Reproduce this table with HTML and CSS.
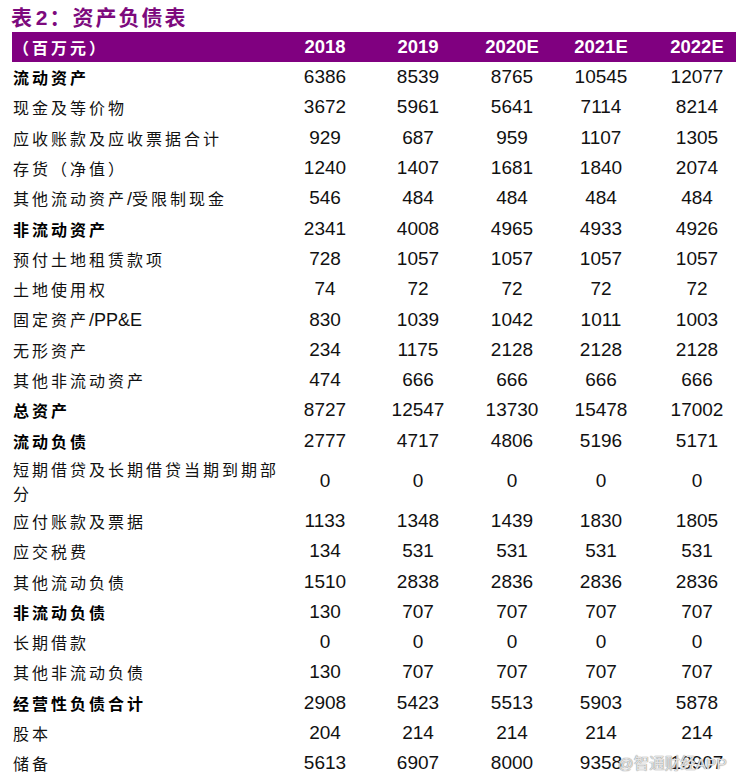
FILE: index.html
```html
<!DOCTYPE html>
<html lang="zh-CN">
<head>
<meta charset="utf-8">
<title>表 2：资产负债表</title>
<link rel="stylesheet" href="styles.css">
</head>
<body>
<div class="page">
  <h1 class="title">表 <span class="lat">2</span>：资产负债表</h1>
  <div class="table">
    <div class="row head">
      <div class="label">（百万元）</div>
      <div class="num">2018</div><div class="num">2019</div><div class="num">2020E</div><div class="num">2021E</div><div class="num">2022E</div>
    </div>
    <div class="row strong"><div class="label">流动资产</div><div class="num">6386</div><div class="num">8539</div><div class="num">8765</div><div class="num">10545</div><div class="num">12077</div></div>
    <div class="row"><div class="label">现金及等价物</div><div class="num">3672</div><div class="num">5961</div><div class="num">5641</div><div class="num">7114</div><div class="num">8214</div></div>
    <div class="row"><div class="label">应收账款及应收票据合计</div><div class="num">929</div><div class="num">687</div><div class="num">959</div><div class="num">1107</div><div class="num">1305</div></div>
    <div class="row"><div class="label">存货（净值）</div><div class="num">1240</div><div class="num">1407</div><div class="num">1681</div><div class="num">1840</div><div class="num">2074</div></div>
    <div class="row"><div class="label">其他流动资产<span class="lat">/</span>受限制现金</div><div class="num">546</div><div class="num">484</div><div class="num">484</div><div class="num">484</div><div class="num">484</div></div>
    <div class="row strong"><div class="label">非流动资产</div><div class="num">2341</div><div class="num">4008</div><div class="num">4965</div><div class="num">4933</div><div class="num">4926</div></div>
    <div class="row"><div class="label">预付土地租赁款项</div><div class="num">728</div><div class="num">1057</div><div class="num">1057</div><div class="num">1057</div><div class="num">1057</div></div>
    <div class="row"><div class="label">土地使用权</div><div class="num">74</div><div class="num">72</div><div class="num">72</div><div class="num">72</div><div class="num">72</div></div>
    <div class="row"><div class="label">固定资产<span class="lat">/PP&amp;E</span></div><div class="num">830</div><div class="num">1039</div><div class="num">1042</div><div class="num">1011</div><div class="num">1003</div></div>
    <div class="row"><div class="label">无形资产</div><div class="num">234</div><div class="num">1175</div><div class="num">2128</div><div class="num">2128</div><div class="num">2128</div></div>
    <div class="row"><div class="label">其他非流动资产</div><div class="num">474</div><div class="num">666</div><div class="num">666</div><div class="num">666</div><div class="num">666</div></div>
    <div class="row strong"><div class="label">总资产</div><div class="num">8727</div><div class="num">12547</div><div class="num">13730</div><div class="num">15478</div><div class="num">17002</div></div>
    <div class="row strong"><div class="label">流动负债</div><div class="num">2777</div><div class="num">4717</div><div class="num">4806</div><div class="num">5196</div><div class="num">5171</div></div>
    <div class="row tall"><div class="label">短期借贷及长期借贷当期到期部分</div><div class="num">0</div><div class="num">0</div><div class="num">0</div><div class="num">0</div><div class="num">0</div></div>
    <div class="row"><div class="label">应付账款及票据</div><div class="num">1133</div><div class="num">1348</div><div class="num">1439</div><div class="num">1830</div><div class="num">1805</div></div>
    <div class="row"><div class="label">应交税费</div><div class="num">134</div><div class="num">531</div><div class="num">531</div><div class="num">531</div><div class="num">531</div></div>
    <div class="row"><div class="label">其他流动负债</div><div class="num">1510</div><div class="num">2838</div><div class="num">2836</div><div class="num">2836</div><div class="num">2836</div></div>
    <div class="row strong"><div class="label">非流动负债</div><div class="num">130</div><div class="num">707</div><div class="num">707</div><div class="num">707</div><div class="num">707</div></div>
    <div class="row"><div class="label">长期借款</div><div class="num">0</div><div class="num">0</div><div class="num">0</div><div class="num">0</div><div class="num">0</div></div>
    <div class="row"><div class="label">其他非流动负债</div><div class="num">130</div><div class="num">707</div><div class="num">707</div><div class="num">707</div><div class="num">707</div></div>
    <div class="row strong"><div class="label">经营性负债合计</div><div class="num">2908</div><div class="num">5423</div><div class="num">5513</div><div class="num">5903</div><div class="num">5878</div></div>
    <div class="row"><div class="label">股本</div><div class="num">204</div><div class="num">214</div><div class="num">214</div><div class="num">214</div><div class="num">214</div></div>
    <div class="row"><div class="label">储备</div><div class="num">5613</div><div class="num">6907</div><div class="num">8000</div><div class="num">9358</div><div class="num">10907</div></div>
  </div>
  <div class="watermark">@智通财经APP</div>
</div>
</body>
</html>
```
FILE: styles.css
```css
html, body {
  margin: 0;
  padding: 0;
  background: #ffffff;
  overflow: hidden;
}
.page {
  position: relative;
  width: 736px;
  height: 782px;
  overflow: hidden;
}
.title {
  margin: 0;
  height: 32px;
  padding-left: 11px;
  font-family: "Noto Sans CJK SC", sans-serif;
  font-weight: 700;
  font-size: 21px;
  line-height: 33px;
  letter-spacing: 2px;
  word-spacing: -5px;
  color: #7d0a7d;
}
.title .lat {
  font-family: "Liberation Sans", sans-serif;
}
.table {
  margin-left: 12px;
  width: 724px;
  overflow: hidden;
}
.row {
  display: grid;
  grid-template-columns: 268px 90px 96px 92px 86px 106px;
  align-items: center;
  height: 30.3px;
}
.row.head {
  height: 30px;
  background: #800080;
  color: #ffffff;
}
.row.tall {
  height: 50px;
}
.label {
  padding-left: 1px;
  font-family: "Noto Sans CJK SC", sans-serif;
  font-size: 16px;
  letter-spacing: 3px;
  line-height: 24px;
  color: #111111;
}
.label .lat {
  font-family: "Liberation Sans", sans-serif;
  font-size: 18px;
  letter-spacing: 0;
}
.strong .label {
  font-weight: 700;
  color: #000000;
}
.num {
  text-align: center;
  font-family: "Liberation Sans", sans-serif;
  font-size: 19px;
  line-height: 24px;
  color: #111111;
}
.head .label {
  font-weight: 700;
  color: #ffffff;
}
.head .num {
  font-weight: 700;
  font-size: 18.5px;
  color: #ffffff;
}
.watermark {
  position: absolute;
  left: 618px;
  top: 753px;
  font-family: "Liberation Sans", "Noto Sans CJK SC", sans-serif;
  font-size: 15.5px;
  line-height: 22px;
  color: rgba(255, 255, 255, 0.75);
  text-shadow: 0 0 1px #8a8a8a, 0 0 1px #8a8a8a;
}
```
